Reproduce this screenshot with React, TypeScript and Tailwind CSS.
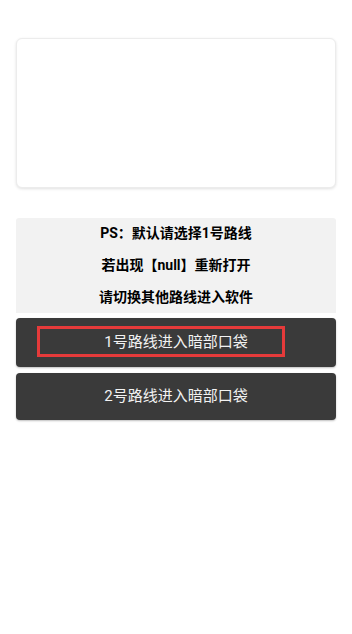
export default function App() {
  const notes = ["PS：默认请选择1号路线", "若出现【null】重新打开", "请切换其他路线进入软件"]

  return (
    <div
      className="min-h-[634px] w-full bg-white px-4 pt-[38px]"
      style={{ fontFamily: "Roboto, 'Noto Sans CJK SC', sans-serif" }}
    >
      {/* empty banner card */}
      <div className="h-[150px] rounded-md border border-[#ececec] bg-white shadow-[0_1px_3px_rgba(0,0,0,0.12)]" />

      {/* notice box */}
      <div className="mt-[30px] flex h-[95px] flex-col rounded-t-[3px] bg-[#f2f2f2]">
        {notes.map((line) => (
          <div key={line} className="flex h-[32px] items-center justify-center text-[14px] font-bold text-black">
            {line}
          </div>
        ))}
      </div>

      {/* route buttons */}
      <button className="relative mt-[5px] flex h-[49px] w-full items-center justify-center rounded-[4px] bg-[#3a3a3a] text-[15px] text-[#f2f2f2] shadow-[0_1px_2px_rgba(0,0,0,0.25)]">
        1号路线进入暗部口袋
        <span className="absolute left-[21px] top-[8px] h-[31px] w-[248px] border-[3px] border-[#e53a3a]" />
      </button>
      <button className="mt-[6px] flex h-[47px] w-full items-center justify-center rounded-[4px] bg-[#3a3a3a] text-[15px] text-[#f2f2f2] shadow-[0_1px_2px_rgba(0,0,0,0.25)]">
        2号路线进入暗部口袋
      </button>
    </div>
  )
}
